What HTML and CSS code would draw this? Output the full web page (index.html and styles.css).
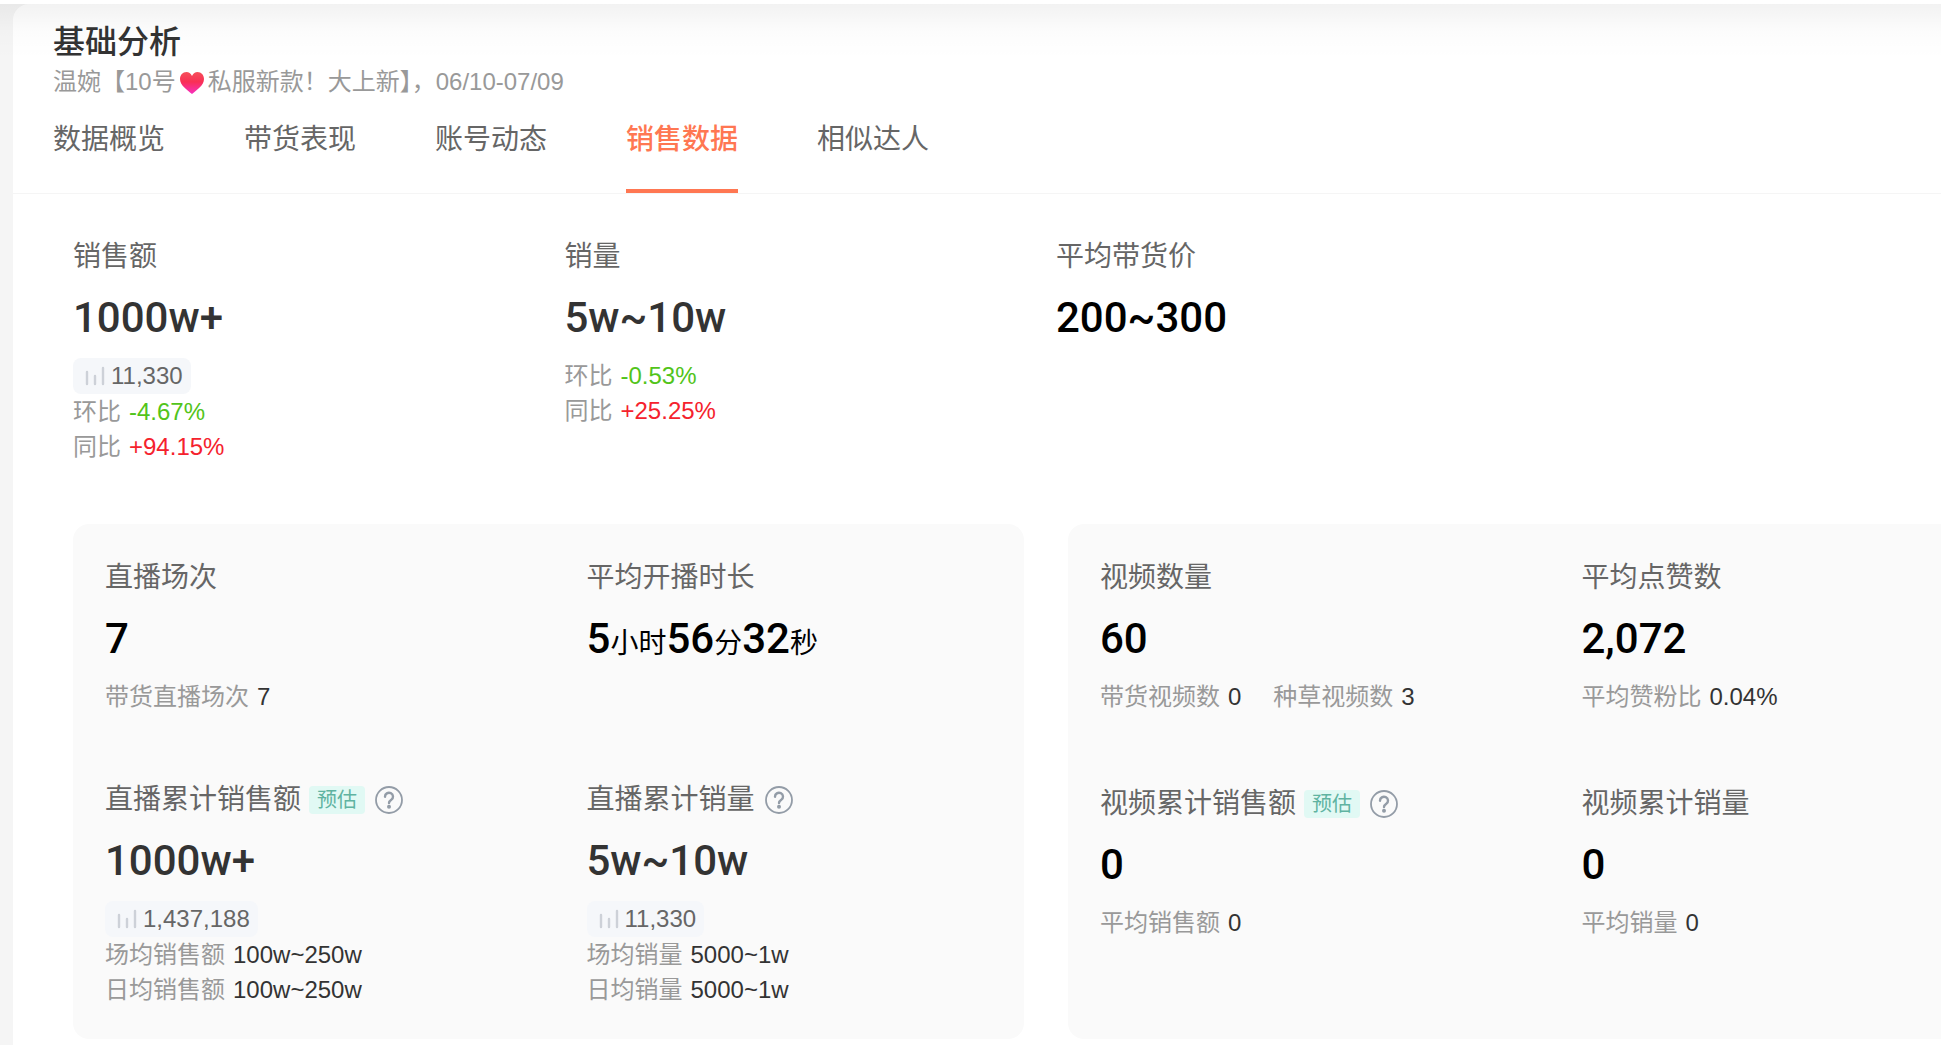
FILE: index.html
```html
<!DOCTYPE html>
<html lang="zh-CN">
<head>
  <meta charset="UTF-8">
  <meta name="viewport" content="width=device-width, initial-scale=1.0">
  <title>基础分析</title>
  <link rel="stylesheet" href="styles.css">
</head>
<body>

  <!-- shared icons -->
  <svg class="sprite" aria-hidden="true">
    <symbol id="icon-bars" viewBox="0 0 20 20">
      <path d="M2 6v12M10 10v8M18 2v16" fill="none" stroke="#cdd1d8" stroke-width="2.4" stroke-linecap="round"/>
    </symbol>
    <symbol id="icon-help" viewBox="0 0 28 28">
      <circle cx="14" cy="14" r="13" fill="none" stroke="#939ca7" stroke-width="1.8"/>
      <path d="M10 10.700a4 3.800 0 1 1 6.300 3c-1.500 1-2.300 1.600-2.300 3.300" fill="none" stroke="#939ca7" stroke-width="2.400" stroke-linecap="round"/>
      <circle cx="14" cy="20.8" r="2" fill="#939ca7"/>
    </symbol>
  </svg>

  <div class="topbar"></div>

  <main class="card">
    <header class="card-header">
      <h1>基础分析</h1>
      <p class="subtitle">温婉【10号<svg class="heart" viewBox="0 0 24 22" role="img" aria-label="heart"><defs><linearGradient id="heart-fill" x1="0" y1="0" x2="0" y2="1"><stop offset="0" stop-color="#f5505a"/><stop offset="0.45" stop-color="#f92f55"/><stop offset="1" stop-color="#f72fc0"/></linearGradient></defs><path d="M12 4C10.800 1.300 8.800 0 6.500 0 2.700 0 0 2.900 0 6.900 0 13.500 7 17.500 12 22c5-4.500 12-8.500 12-15.100C24 2.900 21.300 0 17.500 0 15.200 0 13.200 1.300 12 4z" fill="url(#heart-fill)"/></svg>私服新款！大上新】，06/10-07/09</p>
      <nav class="tabs">
        <a href="#overview">数据概览</a>
        <a href="#goods">带货表现</a>
        <a href="#account">账号动态</a>
        <a href="#sales" class="active">销售数据</a>
        <a href="#similar">相似达人</a>
      </nav>
    </header>

    <section class="content" id="sales">
      <div class="summary">
        <div class="metric">
          <h2 class="label">销售额</h2>
          <p class="value soft">1000w+</p>
          <p class="rank"><svg><use href="#icon-bars"/></svg>11,330</p>
          <p class="sub">环比<span class="down">-4.67%</span></p>
          <p class="sub">同比<span class="up">+94.15%</span></p>
        </div>
        <div class="metric">
          <h2 class="label">销量</h2>
          <p class="value soft">5w~10w</p>
          <p class="sub">环比<span class="down">-0.53%</span></p>
          <p class="sub">同比<span class="up">+25.25%</span></p>
        </div>
        <div class="metric">
          <h2 class="label">平均带货价</h2>
          <p class="value">200~300</p>
        </div>
      </div>

      <div class="panels">
        <div class="panel">
          <div class="metric">
            <h2 class="label">直播场次</h2>
            <p class="value">7</p>
            <p class="sub">带货直播场次<span>7</span></p>
          </div>
          <div class="metric">
            <h2 class="label">平均开播时长</h2>
            <p class="value">5<small>小时</small>56<small>分</small>32<small>秒</small></p>
          </div>
          <div class="metric">
            <h2 class="label">直播累计销售额<span class="tag">预估</span><button class="help" type="button" aria-label="说明"><svg><use href="#icon-help"/></svg></button></h2>
            <p class="value soft">1000w+</p>
            <p class="rank"><svg><use href="#icon-bars"/></svg>1,437,188</p>
            <p class="sub">场均销售额<span>100w~250w</span></p>
            <p class="sub">日均销售额<span>100w~250w</span></p>
          </div>
          <div class="metric">
            <h2 class="label">直播累计销量<button class="help" type="button" aria-label="说明"><svg><use href="#icon-help"/></svg></button></h2>
            <p class="value soft">5w~10w</p>
            <p class="rank"><svg><use href="#icon-bars"/></svg>11,330</p>
            <p class="sub">场均销量<span>5000~1w</span></p>
            <p class="sub">日均销量<span>5000~1w</span></p>
          </div>
        </div>

        <div class="panel panel-video">
          <div class="metric">
            <h2 class="label">视频数量</h2>
            <p class="value">60</p>
            <div class="sub-row">
              <p class="sub">带货视频数<span>0</span></p>
              <p class="sub">种草视频数<span>3</span></p>
            </div>
          </div>
          <div class="metric">
            <h2 class="label">平均点赞数</h2>
            <p class="value">2,072</p>
            <p class="sub">平均赞粉比<span>0.04%</span></p>
          </div>
          <div class="metric">
            <h2 class="label">视频累计销售额<span class="tag">预估</span><button class="help" type="button" aria-label="说明"><svg><use href="#icon-help"/></svg></button></h2>
            <p class="value">0</p>
            <p class="sub">平均销售额<span>0</span></p>
          </div>
          <div class="metric">
            <h2 class="label">视频累计销量</h2>
            <p class="value">0</p>
            <p class="sub">平均销量<span>0</span></p>
          </div>
        </div>
      </div>
    </section>
  </main>

</body>
</html>
```
FILE: styles.css
```css
* {
  box-sizing: border-box;
}

body {
  margin: 0;
  background-color: #f5f5f5;
  font-family: "Liberation Sans", "Noto Sans CJK SC", sans-serif;
  font-size: 24px;
  color: #333;
  overflow: hidden;
}

h1, h2, p {
  margin: 0;
}

.sprite {
  display: none;
}

.topbar {
  position: relative;
  height: 4px;
  background-color: #fff;
}

/* shade under the bar, lies over the card */
.topbar::after {
  content: "";
  position: absolute;
  top: 4px;
  left: 0;
  right: 0;
  height: 56px;
  background: linear-gradient(rgba(0, 0, 0, 0.05), rgba(0, 0, 0, 0.012) 50%, transparent);
  pointer-events: none;
}

/* wider than the window, runs off the right edge */
.card {
  min-height: 100vh;
  margin-left: 13px;
  margin-right: -138px;
  background-color: #fff;
  border-radius: 16px 16px 0 0;
}

.card-header {
  padding: 14px 40px 0;
  border-bottom: 1px solid #f5f5f5;
}

h1 {
  font-size: 32px;
  line-height: 48px;
  font-weight: 500;
}

.subtitle {
  line-height: 32px;
  color: #999;
}

.heart {
  width: 24px;
  height: 22px;
  margin: 0 4px;
  vertical-align: -4px;
}

.tabs {
  display: flex;
  gap: 79px;
}

.tabs a {
  height: 95px;
  padding-top: 22px;
  font-size: 28px;
  line-height: 40px;
  color: #666;
  text-decoration: none;
  border-bottom: 4px solid transparent;
}

.tabs .active {
  color: #ff7752;
  font-weight: 500;
  border-bottom-color: #ff7752;
}

.content {
  padding: 43px 60px 0;
}

.summary {
  display: grid;
  grid-template-columns: repeat(4, 1fr);
  column-gap: 20px;
  margin-bottom: 60px;
}

.label {
  display: flex;
  align-items: center;
  font-size: 28px;
  line-height: 40px;
  font-weight: 400;
  color: #666;
}

.value {
  margin: 17px 0 16px;
  font-family: Roboto, "Noto Sans CJK SC", sans-serif;
  font-size: 42px;
  line-height: 48px;
  font-weight: 500;
  color: #000;
}

.value.soft {
  color: #333;
}

.value small {
  font-size: 28px;
  line-height: 40px;
  font-weight: 400;
}

.sub {
  line-height: 35px;
  color: #999;
}

.sub span {
  margin-left: 8px;
  color: #333;
}

.sub .down {
  color: #52c41a;
}

.sub .up {
  color: #f5222d;
}

.sub-row {
  display: flex;
  gap: 32px;
}

.rank {
  display: flex;
  align-items: center;
  gap: 6px;
  width: fit-content;
  height: 36px;
  padding: 0 8px 0 12px;
  border-radius: 8px;
  background-color: #f5f7fa;
  color: #666;
}

.rank svg {
  width: 20px;
  height: 20px;
}

.tag {
  margin-left: 8px;
  padding: 0 8px;
  border-radius: 4px;
  background-color: #e1f9f4;
  color: #5fb3a1;
  font-size: 20px;
  line-height: 28px;
}

.help {
  margin-left: 10px;
  padding: 0;
  border: none;
  background: none;
  cursor: pointer;
}

.help svg {
  display: block;
  width: 28px;
  height: 28px;
}

.panels {
  display: grid;
  grid-template-columns: repeat(2, 1fr);
  column-gap: 44px;
}

.panel {
  display: grid;
  grid-template-columns: repeat(2, 1fr);
  gap: 66px 44px;
  align-content: start;
  padding: 34px 0 32px 32px;
  border-radius: 16px;
  background-color: #fafafa;
}

.panel-video {
  row-gap: 70px;
}
```
